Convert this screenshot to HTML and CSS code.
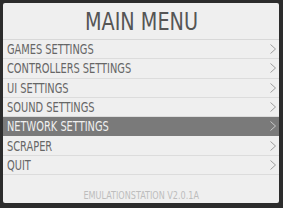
FILE: index.html
```html
<!DOCTYPE html>
<html>
<head>
<meta charset="utf-8">
<link rel="stylesheet" href="styles.css">
</head>
<body>
<div class="panel">
  <div class="title"><span>MAIN MENU</span></div>
  <div class="list">
    <div class="row"><span class="label">GAMES SETTINGS</span><svg class="chev" viewBox="0 0 6 10"><polyline points="0.5,0.5 5.5,5 0.5,9.5"/></svg></div>
    <div class="row"><span class="label">CONTROLLERS SETTINGS</span><svg class="chev" viewBox="0 0 6 10"><polyline points="0.5,0.5 5.5,5 0.5,9.5"/></svg></div>
    <div class="row"><span class="label">UI SETTINGS</span><svg class="chev" viewBox="0 0 6 10"><polyline points="0.5,0.5 5.5,5 0.5,9.5"/></svg></div>
    <div class="row"><span class="label">SOUND SETTINGS</span><svg class="chev" viewBox="0 0 6 10"><polyline points="0.5,0.5 5.5,5 0.5,9.5"/></svg></div>
    <div class="row sel"><span class="label">NETWORK SETTINGS</span><svg class="chev" viewBox="0 0 6 10"><polyline points="0.5,0.5 5.5,5 0.5,9.5"/></svg></div>
    <div class="row"><span class="label">SCRAPER</span><svg class="chev" viewBox="0 0 6 10"><polyline points="0.5,0.5 5.5,5 0.5,9.5"/></svg></div>
    <div class="row"><span class="label">QUIT</span><svg class="chev" viewBox="0 0 6 10"><polyline points="0.5,0.5 5.5,5 0.5,9.5"/></svg></div>
  </div>
  <div class="footer"><span>EMULATIONSTATION V2.0.1A</span></div>
</div>
</body>
</html>
```
FILE: styles.css
```css
html, body {
  margin: 0;
  padding: 0;
  background: #2c2c2c;
  width: 283px;
  height: 208px;
  overflow: hidden;
}
.panel {
  margin: 3px 0 0 3px;
  width: 276px;
  height: 200px;
  background: #efefef;
  border-radius: 2px;
  display: flex;
  flex-direction: column;
  font-family: "DejaVu Sans", sans-serif;
  font-stretch: condensed;
  color: #666;
}
.title {
  height: 37px;
  box-sizing: border-box;
  border-bottom: 1px solid #d8d8d8;
  text-align: center;
  font-size: 24px;
  line-height: 37px;
  color: #555;
}
.title span {
  display: inline-block;
  transform: scaleX(0.89);
  transform-origin: center;
  padding-top: 1px;
}
.row {
  height: 19.3px;
  box-sizing: border-box;
  border-bottom: 1px solid #dcdcdc;
  display: flex;
  align-items: center;
  justify-content: space-between;
  padding: 0 3px 0 4px;
  font-size: 14px;
}
.label {
  display: inline-block;
  white-space: nowrap;
  transform: scaleX(0.78);
  transform-origin: left center;
}
.row.sel {
  background: #7a7a7a;
  color: #f0f0f0;
  border-bottom-color: #7a7a7a;
}
.chev {
  width: 6px;
  height: 10px;
  fill: none;
  stroke: #888;
  stroke-width: 0.8;
}
.sel .chev { stroke: #ddd; }
.footer {
  flex: 1;
  display: flex;
  align-items: flex-end;
  justify-content: center;
  padding-bottom: 2px;
  font-size: 10px;
  color: #bdbdbd;
}
.footer span {
  display: inline-block;
  transform: scaleX(0.9);
  transform-origin: center;
}
```
